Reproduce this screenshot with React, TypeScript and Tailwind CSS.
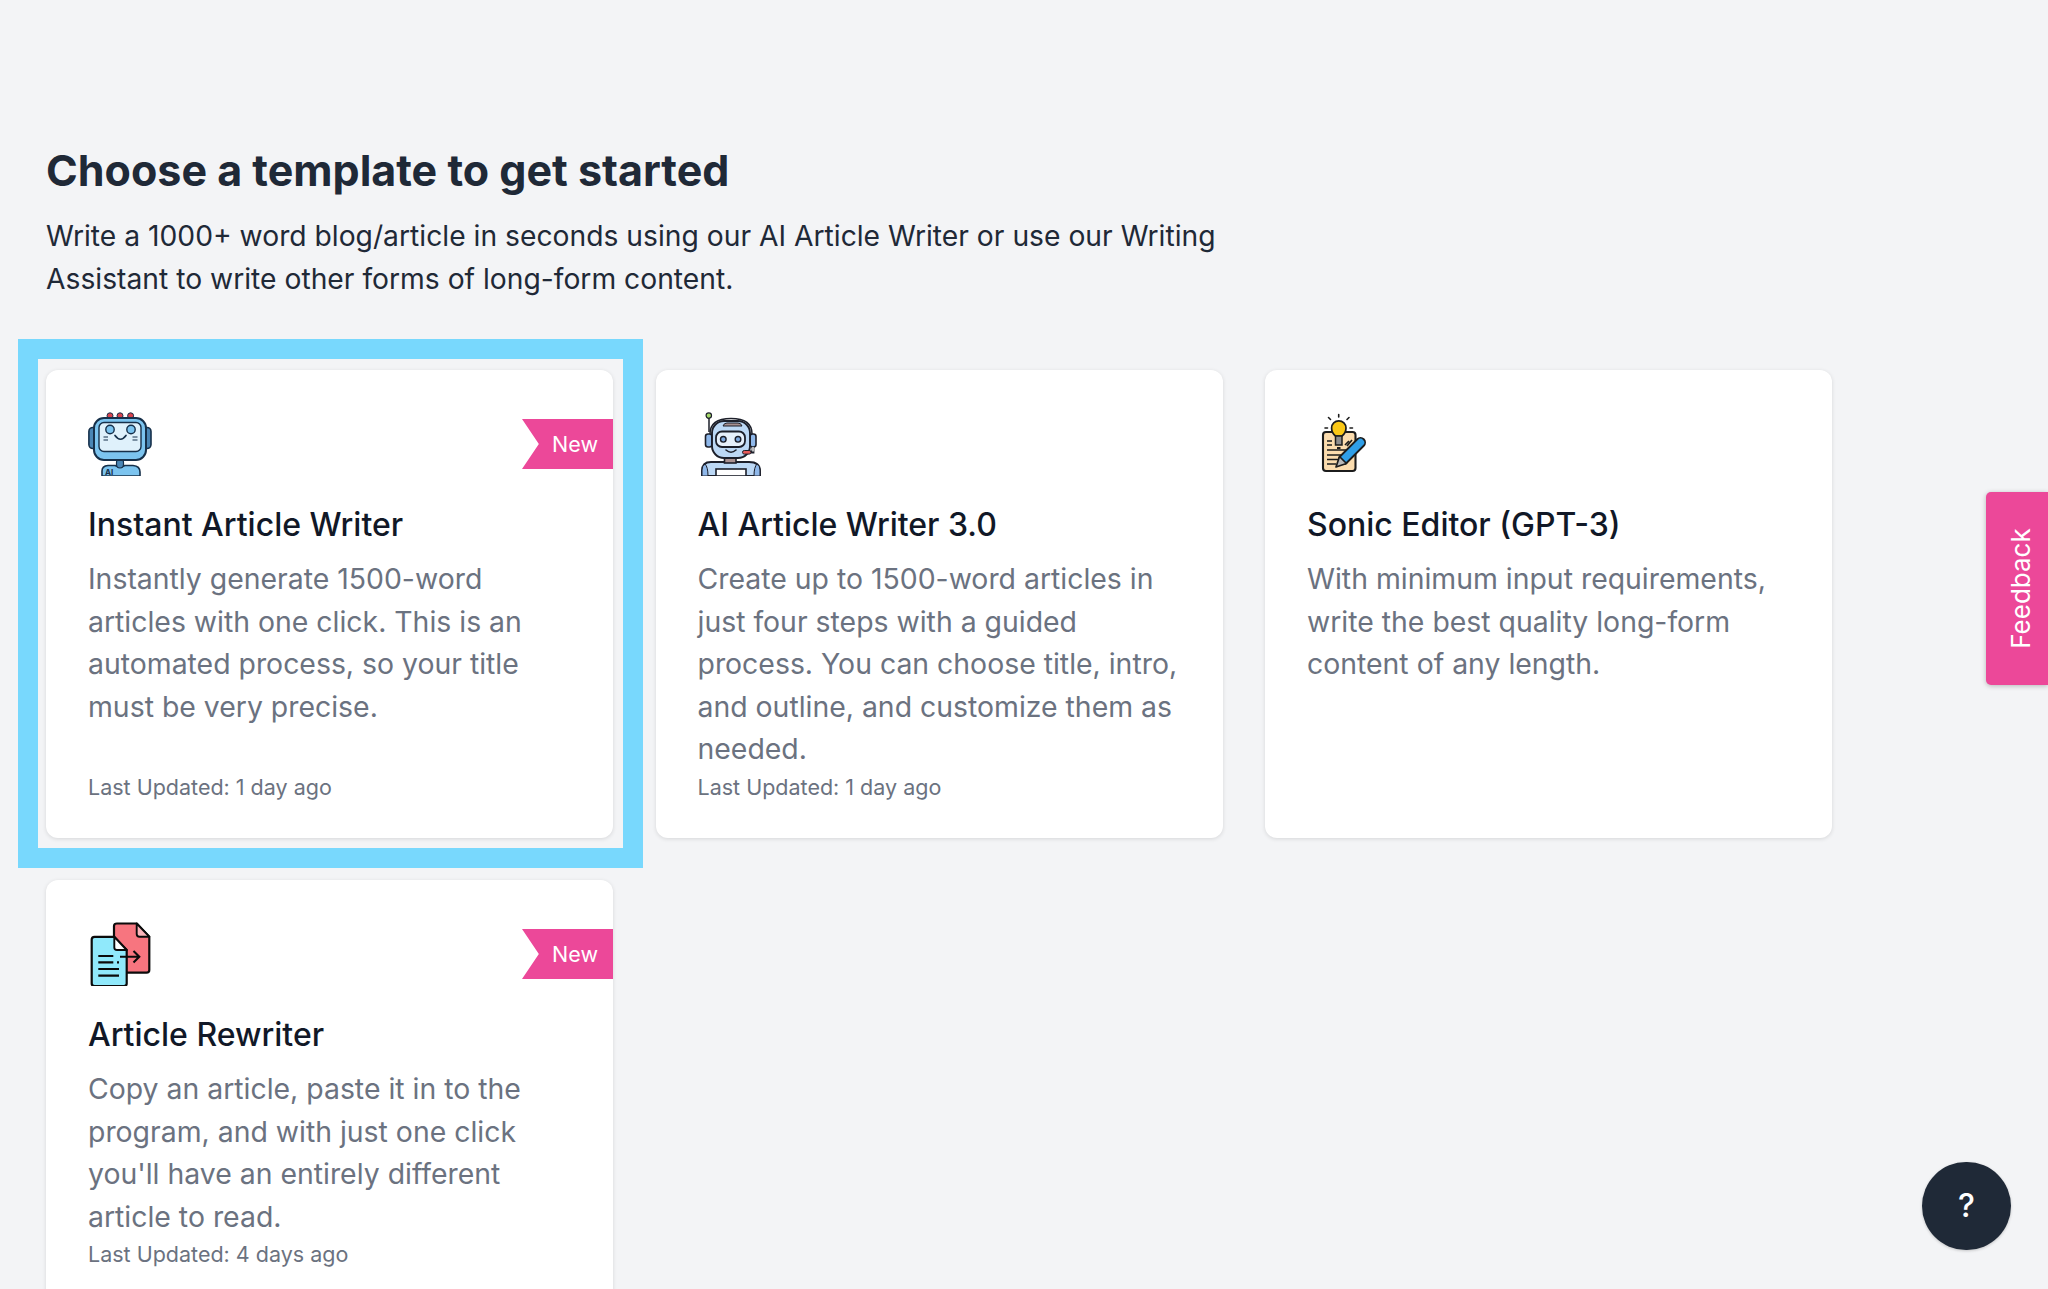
const font = { fontFamily: "Inter, 'Liberation Sans', sans-serif" };

function RobotOne() {
  const d = "#16304a";
  return (
    <svg viewBox="0 0 64 64" className="w-16 h-16">
      <circle cx="22" cy="3.8" r="3" fill="#d9434e" stroke={d} strokeWidth="1" />
      <circle cx="32" cy="3.8" r="3" fill="#d9434e" stroke={d} strokeWidth="1" />
      <circle cx="42.6" cy="3.8" r="3" fill="#d9434e" stroke={d} strokeWidth="1" />
      <rect x="0.9" y="15.5" width="8" height="21" rx="4" fill="#4a86b5" stroke={d} strokeWidth="1.6" />
      <rect x="55" y="15.5" width="8" height="21" rx="4" fill="#4a86b5" stroke={d} strokeWidth="1.6" />
      <path d="M14 64 V59 Q14 54 20 53.5 H27 Q32 56 37 53.5 H45 Q52 54 52 60 V64 Z" fill="#7cc4ef" stroke={d} strokeWidth="1.6" />
      <rect x="28.5" y="47" width="7" height="9" rx="3.5" fill="#4a86b5" stroke={d} strokeWidth="1.2" />
      <rect x="6" y="6" width="52" height="42" rx="10" fill="#7cc4ef" stroke={d} strokeWidth="2" />
      <rect x="11" y="10.5" width="42" height="29" rx="5" fill="#dff1fb" stroke={d} strokeWidth="1.4" />
      <circle cx="22" cy="17.5" r="4.2" fill="#7cc4ef" stroke={d} strokeWidth="1.4" />
      <circle cx="43" cy="17.5" r="4.2" fill="#7cc4ef" stroke={d} strokeWidth="1.4" />
      <path d="M27 23.5 Q32.5 31 38 23.5" fill="none" stroke={d} strokeWidth="1.7" strokeLinecap="round" />
      <path d="M15.5 25 H20 M15.5 28 H20 M44.5 25 H49.5 M44.5 28 H49.5" stroke={d} strokeWidth="1.2" />
      <text x="17" y="62.5" fontSize="8" fontWeight="700" fill={d} fontFamily="Inter, sans-serif">AI</text>
    </svg>
  );
}

function RobotTwo() {
  const d = "#1c1f2a";
  return (
    <svg viewBox="0 0 64 64" className="w-16 h-16">
      <path d="M11 6 V20" stroke={d} strokeWidth="1.5" />
      <circle cx="10.8" cy="3.6" r="2.7" fill="#a6d96a" stroke={d} strokeWidth="1.2" />
      <path d="M4 64 V59 Q4 50 13 50 H51 Q62 50 62 59 V64 Z" fill="#bcd8f5" stroke={d} strokeWidth="1.9" />
      <path d="M4 64 V58 Q4 54 7 52 Q10 55 10 64 Z M62 64 V58 Q62 54 59 52 Q56 55 56 64 Z" fill="#8fb8ea" stroke={d} strokeWidth="1" />
      <rect x="18" y="57" width="30" height="7" fill="#fff" stroke={d} strokeWidth="1.6" />
      <rect x="26.5" y="45" width="11.5" height="6" fill="#a89090" stroke={d} strokeWidth="1.6" />
      <rect x="7.5" y="22" width="6.5" height="13" rx="2.5" fill="#8fb8ea" stroke={d} strokeWidth="1.6" />
      <rect x="52" y="22" width="6" height="13" rx="2.5" fill="#8fb8ea" stroke={d} strokeWidth="1.6" />
      <rect x="14" y="9" width="38" height="37" rx="12" fill="#bcd8f5" stroke={d} strokeWidth="1.9" />
      <path d="M25 14 Q26 11 29 11 H40 Q43 11 44 14 Z" fill="#a89090" stroke={d} strokeWidth="1" />
      <path d="M12 22 Q12 6.5 33 6.5 Q54 6.5 54 22" fill="none" stroke={d} strokeWidth="1.6" />
      <path d="M55 35 V40 H50" fill="none" stroke={d} strokeWidth="2.8" />
      <path d="M55 35 V39.5" stroke="#fff" strokeWidth="1.4" />
      <rect x="18" y="19.5" width="29" height="15.5" rx="6" fill="#e6f0fb" stroke={d} strokeWidth="1.8" />
      <circle cx="25.3" cy="27.3" r="2.8" fill="#7ea9e0" stroke={d} strokeWidth="1.4" />
      <circle cx="40" cy="27.3" r="2.8" fill="#7ea9e0" stroke={d} strokeWidth="1.4" />
      <path d="M28 38 Q33 42.5 38 38" fill="none" stroke={d} strokeWidth="1.6" strokeLinecap="round" />
      <rect x="44.5" y="38.5" width="8.5" height="3.6" rx="1.8" fill="#e85a5a" stroke={d} strokeWidth="1" />
    </svg>
  );
}

function NoteIcon() {
  const d = "#1c1c1c";
  return (
    <svg viewBox="0 0 64 64" className="w-16 h-16">
      <rect x="16" y="20" width="32.5" height="39" rx="3" fill="#fbdcae" stroke={d} strokeWidth="2.1" />
      <path d="M20 29 H25 M20 33 H25 M20 38 H45 M20 43 H37 M20 47.5 H32 M20 52 H29 M42 29 L38 33 M45 28 L40 34" stroke={d} strokeWidth="1.7" />
      <path d="M31.7 5 V2.5 M23.5 7.5 L21.5 5.5 M40 7.5 L42 5.5 M20.5 16 H18 M43 16 H45.5" stroke={d} strokeWidth="1.6" strokeLinecap="round" />
      <path d="M28.5 24 Q24.6 21 24.6 16 A7.2 7.2 0 0 1 39 16 Q39 21 35 24 Z" fill="#fbc816" stroke={d} strokeWidth="1.7" />
      <rect x="28.5" y="24" width="6.5" height="9" fill="#8d8d8d" stroke={d} strokeWidth="1.5" />
      <path d="M30 36 H33.5" stroke={d} strokeWidth="2" />
      <path d="M36.5 47.5 L53.5 30.5" stroke={d} strokeWidth="11" strokeLinecap="round" />
      <path d="M36.5 47.5 L53.5 30.5" stroke="#2f9fe8" strokeWidth="7.4" strokeLinecap="round" />
      <path d="M29 55 L32.5 44.5 L39.5 51.5 Z" fill="#b9b9b9" stroke={d} strokeWidth="1.7" strokeLinejoin="round" />
    </svg>
  );
}

function RewriteIcon() {
  const d = "#0b0b0b";
  return (
    <svg viewBox="0 0 64 64" className="w-16 h-16">
      <path d="M29 1.5 H48.7 L61.3 14.7 V48 Q61.3 50.7 58.5 50.7 H29 Q26 50.7 26 48 V4 Q26 1.5 29 1.5 Z" fill="#f7757f" stroke={d} strokeWidth="2.2" strokeLinejoin="round" />
      <path d="M48.7 1.5 V12 Q48.7 14.7 51.5 14.7 H61.3 Z" fill="#fbb5bb" stroke={d} strokeWidth="1.9" strokeLinejoin="round" />
      <path d="M6.5 14.8 H26.3 L38.7 28 V61.5 Q38.7 64 36 64 H6.5 Q3.7 64 3.7 61.5 V17.5 Q3.7 14.8 6.5 14.8 Z" fill="#90e9fb" stroke={d} strokeWidth="2.2" strokeLinejoin="round" />
      <path d="M26.3 14.8 V25.5 Q26.3 28 29 28 H38.7 Z" fill="#fff" stroke={d} strokeWidth="1.9" strokeLinejoin="round" />
      <path d="M10.3 34 H25.3 M10.3 40.3 H25.3 M29 40.3 H31 M10.3 47 H31 M10.3 53.7 H31" stroke={d} strokeWidth="2.2" />
      <path d="M32 34.7 H51 M45.5 29 L51.3 34.7 L45.5 40.4" fill="none" stroke={d} strokeWidth="2.1" />
    </svg>
  );
}

function NewRibbon() {
  return (
    <div className="absolute right-0 top-[49px] flex h-[50px] w-[91px] items-center justify-end bg-[#ec4899] pr-[15px] text-[21.5px] text-white [clip-path:polygon(0_0,100%_0,100%_100%,0_100%,18.5%_50%)]">
      New
    </div>
  );
}

type CardData = {
  icon: React.ReactNode;
  title: string;
  text: string;
  updated: string;
  isNew?: boolean;
  highlighted?: boolean;
};

const cards: CardData[] = [
  {
    icon: <RobotOne />,
    title: "Instant Article Writer",
    text: "Instantly generate 1500-word articles with one click. This is an automated process, so your title must be very precise.",
    updated: "Last Updated: 1 day ago",
    isNew: true,
    highlighted: true,
  },
  {
    icon: <RobotTwo />,
    title: "AI Article Writer 3.0",
    text: "Create up to 1500-word articles in just four steps with a guided process. You can choose title, intro, and outline, and customize them as needed.",
    updated: "Last Updated: 1 day ago",
  },
  {
    icon: <NoteIcon />,
    title: "Sonic Editor (GPT-3)",
    text: "With minimum input requirements, write the best quality long-form content of any length.",
    updated: "",
  },
  {
    icon: <RewriteIcon />,
    title: "Article Rewriter",
    text: "Copy an article, paste it in to the program, and with just one click you'll have an entirely different article to read.",
    updated: "Last Updated: 4 days ago",
    isNew: true,
  },
];

function Card({ icon, title, text, updated, isNew, highlighted }: CardData) {
  return (
    <div className="relative flex flex-col rounded-[12px] bg-white px-[42px] pt-[42px] pb-[35.5px] shadow-[0_1px_4px_rgba(0,0,0,0.12)]">
      {highlighted && (
        <div className="absolute -left-[28px] -right-[30px] -top-[31px] -bottom-[30px] border-[20px] border-[#78d8fd]" />
      )}
      {isNew && <NewRibbon />}
      <div className="h-16 w-16">{icon}</div>
      <h3 className="mt-[28px] text-[32px] leading-[42px] font-medium text-[#111827]">{title}</h3>
      <p className="mt-[12px] flex-1 text-[28.4px] leading-[42.5px] text-[#6b7280]">{text}</p>
      {updated && <p className="min-h-[32px] text-[21.5px] leading-[32px] text-[#6b7280]">{updated}</p>}
    </div>
  );
}

export default function App() {
  return (
    <div className="relative h-[1289px] overflow-hidden bg-[#f3f4f6]" style={font}>
      <div className="pl-[46px] pt-[144px]">
        <h1 className="text-[43px] leading-[52px] font-bold text-[#1f2937]">Choose a template to get started</h1>
        <p className="mt-[19px] w-[1200px] text-[28.25px] leading-[42.5px] text-[#1f2937]">
          Write a 1000+ word blog/article in seconds using our AI Article Writer or use our Writing Assistant to write other forms of long-form content.
        </p>
        <div className="mt-[70px] grid grid-cols-[repeat(3,567px)] gap-x-[42.5px] gap-y-[42px]">
          {cards.map((c) => (
            <Card key={c.title} {...c} />
          ))}
        </div>
      </div>
      <div className="absolute right-0 top-[492px] flex h-[193px] w-[62px] items-center justify-center rounded-l-[5px] bg-[#ec4899] pl-[7px] shadow-[0_1px_5px_rgba(0,0,0,0.25)]">
        <span className="-rotate-90 whitespace-nowrap text-[26px] text-white">Feedback</span>
      </div>
      <div className="absolute left-[1922px] top-[1162px] flex h-[88px] w-[89px] items-center justify-center rounded-full bg-[#1f2937] text-[32px] font-medium text-white shadow-[0_1px_3px_rgba(0,0,0,0.2)]">
        ?
      </div>
    </div>
  );
}
